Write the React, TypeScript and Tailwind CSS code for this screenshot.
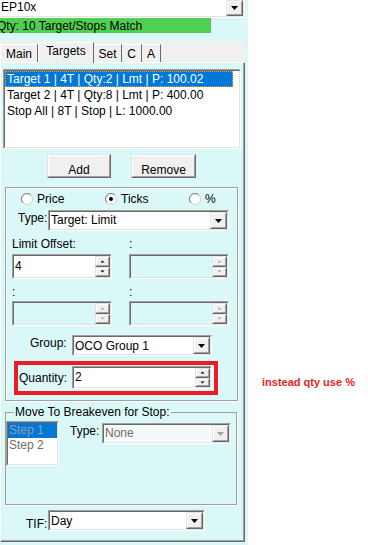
import clsx from "clsx";
import type { ReactNode } from "react";

const sunkenOuter = "border border-t-[#a0a0a0] border-l-[#a0a0a0] border-b-white border-r-white";
const sunkenInner = "border border-t-[#696969] border-l-[#696969] border-b-[#e3e3e3] border-r-[#e3e3e3]";
const raisedOuter = "border border-t-[#e3e3e3] border-l-[#e3e3e3] border-b-[#696969] border-r-[#696969]";
const raisedInner = "border border-t-white border-l-white border-b-[#a0a0a0] border-r-[#a0a0a0] bg-[#f0f0f0]";

function DropButton({ disabled }: { disabled?: boolean }) {
    return (
        <div className={clsx("flex h-full w-[17px] shrink-0", raisedOuter)}>
            <div className={clsx("flex flex-1 items-center justify-center", raisedInner)}>
                <svg width="7" height="4" viewBox="0 0 7 4">
                    <path d="M0 0h7L3.5 4z" fill={disabled ? "#a0a0a0" : "#000"} />
                </svg>
            </div>
        </div>
    );
}

function Combo({ className, text, disabled, pad = "pt-[1px]" }: { className: string; text: string; disabled?: boolean; pad?: string }) {
    return (
        <div className={clsx("flex h-[21px] shrink-0", sunkenOuter, className)}>
            <div className={clsx("flex min-w-0 flex-1", sunkenInner, disabled ? "bg-[#f4fafa]" : "bg-white")}>
                <span className={clsx("flex-1 whitespace-nowrap pl-[1px] leading-[15px]", pad, disabled ? "text-[#6d6d6d]" : "text-black")}>
                    {text}
                </span>
                <DropButton disabled={disabled} />
            </div>
        </div>
    );
}

function SpinBtn({ up, disabled }: { up?: boolean; disabled?: boolean }) {
    return (
        <div className={clsx("flex flex-1", raisedOuter)}>
            <div className={clsx("flex flex-1 items-center justify-center", raisedInner)}>
                <svg width="5" height="3" viewBox="0 0 5 3">
                    <path d={up ? "M2.5 0.5L4.5 2.5H0.5z" : "M0.5 0.5h4L2.5 2.5z"} fill={disabled ? "#a0a0a0" : "#000"} />
                </svg>
            </div>
        </div>
    );
}

function Spin({ className, value, disabled }: { className: string; value?: string; disabled?: boolean }) {
    return (
        <div className={clsx("flex shrink-0", sunkenOuter, className)}>
            <div className={clsx("flex flex-1 items-center", sunkenInner, disabled ? "bg-[#dbf8f8]" : "bg-white")}>
                <span className="flex-1 pl-[1px]">{value}</span>
                <div className="flex h-full w-[15px] flex-col">
                    <SpinBtn up disabled={disabled} />
                    <SpinBtn disabled={disabled} />
                </div>
            </div>
        </div>
    );
}

function Radio({ checked }: { checked?: boolean }) {
    return (
        <svg width="12" height="12" viewBox="0 0 12 12" className="shrink-0">
            <circle cx="6" cy="6" r="5.5" fill="#fff" stroke="#d0d0d0" />
            <path d="M2.1 9.9A5.5 5.5 0 0 1 9.9 2.1" fill="none" stroke="#808080" />
            {checked && <circle cx="6" cy="6" r="2" fill="#000" />}
        </svg>
    );
}

function Tab({ className, children }: { className: string; children: ReactNode }) {
    return (
        <div className={clsx("flex h-[18px] shrink-0 justify-center border-t border-l border-white border-r border-r-[#696969] pt-[2px]", className)}>
            {children}
        </div>
    );
}

function Button({ className, children }: { className: string; children: ReactNode }) {
    return (
        <div className={clsx("flex h-[24px]", raisedOuter, className)}>
            <div className={clsx("flex flex-1 justify-center pt-[7px]", raisedInner)}>{children}</div>
        </div>
    );
}

export default function App() {
    return (
        <div className="flex h-[545px] w-[368px] overflow-hidden bg-white font-['Liberation_Sans',Arial,sans-serif] text-[12px] leading-[15px] text-black">
            <div className="flex w-[248px] shrink-0 flex-col bg-[#dbf8f8]">
                {/* account combo */}
                <div className="h-[18px] w-[245px] border-b border-r border-white">
                    <div className="flex h-full border-b border-r border-[#e3e3e3] bg-white">
                        <span className="flex-1 pl-[1px]">EP10x</span>
                        <DropButton />
                    </div>
                </div>

                <div className="h-[15px] w-[211px] overflow-hidden bg-[#4fd051] pt-[1px]">
                    <div className="-ml-[3px] whitespace-nowrap">Qty: 10 Target/Stops Match</div>
                </div>

                {/* tabs */}
                <div className="mt-[8px] flex h-[21px] w-[245px] items-end bg-[#f0f0f0]">
                    <Tab className="w-[38px]">Main</Tab>
                    <div className="relative z-10 -mb-px flex h-[21px] w-[56px] shrink-0 justify-center border-t border-l border-white border-r border-r-[#696969] bg-[#f0f0f0] pt-[1px]">
                        Targets
                    </div>
                    <Tab className="w-[28px] border-l-0">Set</Tab>
                    <Tab className="w-[20px] border-l-0">C</Tab>
                    <Tab className="w-[19px] border-l-0">A</Tab>
                </div>

                {/* tab page */}
                <div className="h-[480px] w-[245px] border border-t-white border-l-white border-r-[#696969] border-b-[#696969]">
                    <div className="flex h-full flex-col border-r border-b border-[#a0a0a0]">
                        <div className={clsx("ml-[2px] mt-[6px] h-[80px] w-[238px]", sunkenOuter)}>
                            <div className={clsx("h-full bg-white", sunkenInner)}>
                                <div className="h-[16px] w-[228px] whitespace-nowrap border border-dotted border-[#f0a030] bg-[#0078d7] pl-[1px] leading-[14px] text-white">
                                    Target 1 | 4T | Qty:2 | Lmt | P: 100.02
                                </div>
                                <div className="h-[16px] whitespace-nowrap pl-[2px] leading-[16px]">Target 2 | 4T | Qty:8 | Lmt | P: 400.00</div>
                                <div className="h-[16px] whitespace-nowrap pl-[2px] leading-[16px]">Stop All | 8T | Stop | L: 1000.00</div>
                            </div>
                        </div>

                        <div className="mt-[5px] flex">
                            <Button className="ml-[46px] w-[64px]">Add</Button>
                            <Button className="ml-[20px] w-[65px]">Remove</Button>
                        </div>

                        {/* order settings group */}
                        <div className="ml-[4px] mt-[9px] flex h-[214px] w-[233px] flex-col border border-[#a0a0a0] shadow-[inset_1px_1px_0_#fff,1px_1px_0_#fff]">
                            <div className="mt-[5px] flex h-[12px] items-center leading-[12px]">
                                <div className="ml-[15px] flex w-[84px] items-center gap-[4px]"><Radio />Price</div>
                                <div className="flex w-[84px] items-center gap-[4px]"><Radio checked />Ticks</div>
                                <div className="flex items-center gap-[4px]"><Radio />%</div>
                            </div>

                            <div className="mt-[5px] flex h-[21px] items-start">
                                <span className="ml-[12px] mt-[1px] w-[30px] whitespace-nowrap">Type:</span>
                                <Combo className="w-[181px]" text="Target: Limit" />
                            </div>

                            <div className="mt-[6px] flex h-[15px]">
                                <span className="ml-[6px] w-[117px]">Limit Offset:</span>
                                <span>:</span>
                            </div>
                            <div className="mt-[2px] flex">
                                <Spin className="ml-[6px] h-[25px] w-[100px]" value="4" />
                                <Spin className="ml-[17px] h-[25px] w-[100px]" disabled />
                            </div>

                            <div className="mt-[6px] flex h-[15px]">
                                <span className="ml-[6px] w-[117px]">:</span>
                                <span>:</span>
                            </div>
                            <div className="mt-[1px] flex">
                                <Spin className="ml-[6px] h-[25px] w-[100px]" disabled />
                                <Spin className="ml-[17px] h-[25px] w-[100px]" disabled />
                            </div>

                            <div className="mt-[9px] flex h-[21px] items-start">
                                <span className="ml-[24px] mt-[1px] w-[42px]">Group:</span>
                                <Combo className="w-[140px]" text="OCO Group 1" pad="pt-[2px]" />
                            </div>

                            <div className="ml-[8px] mt-[5px] flex h-[34px] w-[204px] items-start border-4 border-[#ed1c24]">
                                <span className="ml-[1px] w-[53px] self-center">Quantity:</span>
                                <Spin className="mt-[1px] h-[23px] w-[140px]" value="2" />
                            </div>
                        </div>

                        {/* breakeven group */}
                        <fieldset className="ml-[4px] mt-[4px] h-[100px] w-[232px] border border-[#a0a0a0] shadow-[1px_1px_0_#fff]">
                            <legend className="ml-[8px] px-[1px] leading-[15px]">Move To Breakeven for Stop:</legend>
                            <div className="flex items-start">
                                <div className={clsx("mt-[1px] h-[45px] w-[53px]", sunkenOuter)}>
                                    <div className={clsx("h-full bg-white leading-[15px] text-[#6d6d6d]", sunkenInner)}>
                                        <div className="bg-[#0078d7] pl-[1px] text-[#8e9cb0]">Step 1</div>
                                        <div className="pl-[1px]">Step 2</div>
                                    </div>
                                </div>
                                <span className="ml-[11px] mt-[4px] w-[32px]">Type:</span>
                                <Combo className="mt-[3px] w-[129px]" text="None" disabled />
                            </div>
                        </fieldset>

                        <div className="mt-[5px] flex h-[21px] items-start">
                            <span className="ml-[25px] mt-[7px] w-[22px]">TIF:</span>
                            <Combo className="w-[157px]" text="Day" pad="pt-[2px]" />
                        </div>
                    </div>
                </div>
            </div>

            <div className="flex-1">
                <div className="ml-[14px] mt-[376px] whitespace-nowrap text-[11px] font-bold leading-[13px] text-[#ed1c24]">
                    instead qty use %
                </div>
            </div>
        </div>
    );
}
